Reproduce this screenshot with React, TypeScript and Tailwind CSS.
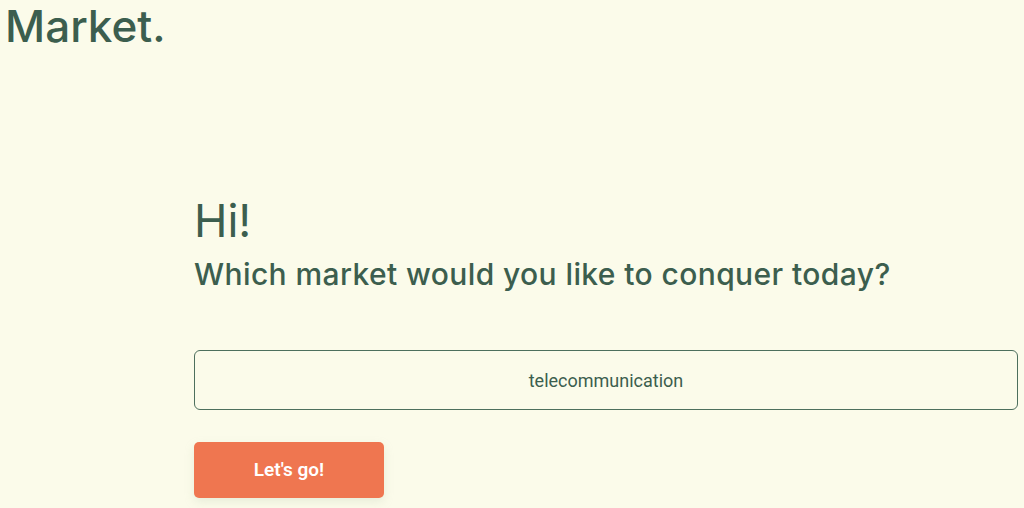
export default function App() {
  return (
    <div className="min-h-[508px] w-full overflow-hidden bg-[#fbfbea] text-[#3c5e4e]" style={{ fontFamily: "Inter, 'Noto Sans', sans-serif" }}>
      <h1 className="pl-[5px] text-[44px] leading-[52px] font-medium">Market.</h1>

      <div className="ml-[194px] mt-[142px] w-[824px]">
        <h2 className="text-[45px] leading-[54px] font-normal">Hi!</h2>
        <p className="mt-[8px] text-[30px] leading-[36px] font-medium tracking-[0.4px]">
          Which market would you like to conquer today?
        </p>

        <input
          type="text"
          defaultValue="telecommunication"
          className="mt-[58px] block h-[60px] w-full rounded-[6px] border border-[#4d6f5d] bg-transparent text-center text-[18px] text-[#3c5e4e] outline-none"
          style={{ fontFamily: "Roboto, sans-serif" }}
        />

        <button
          className="mt-[32px] h-[56px] w-[190px] rounded-[5px] bg-[#ef7650] text-[19px] font-semibold text-white shadow-[0_4px_10px_rgba(180,200,170,0.25)]"
          style={{ fontFamily: "Roboto, sans-serif" }}
        >
          Let's go!
        </button>
      </div>
    </div>
  );
}
